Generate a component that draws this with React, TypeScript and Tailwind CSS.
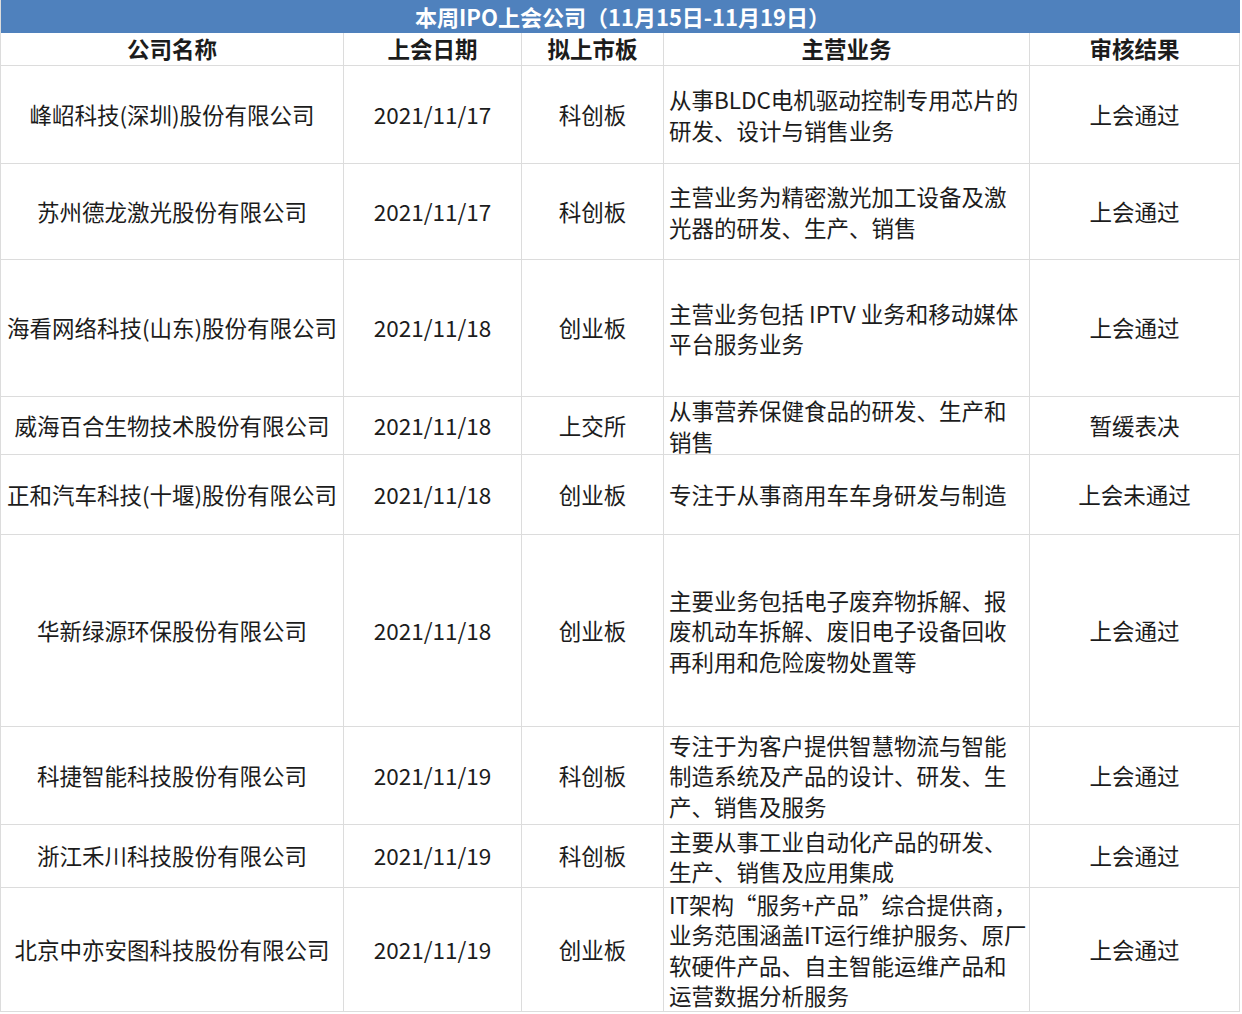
const rows = [
  {
    name: "峰岹科技(深圳)股份有限公司",
    date: "2021/11/17",
    board: "科创板",
    biz: ["从事BLDC电机驱动控制专用芯片的", "研发、设计与销售业务"],
    result: "上会通过",
    h: "h-[98px]",
  },
  {
    name: "苏州德龙激光股份有限公司",
    date: "2021/11/17",
    board: "科创板",
    biz: ["主营业务为精密激光加工设备及激", "光器的研发、生产、销售"],
    result: "上会通过",
    h: "h-[96px]",
  },
  {
    name: "海看网络科技(山东)股份有限公司",
    date: "2021/11/18",
    board: "创业板",
    biz: ["主营业务包括 IPTV 业务和移动媒体", "平台服务业务"],
    result: "上会通过",
    h: "h-[137px]",
  },
  {
    name: "威海百合生物技术股份有限公司",
    date: "2021/11/18",
    board: "上交所",
    biz: ["从事营养保健食品的研发、生产和", "销售"],
    result: "暂缓表决",
    h: "h-[58px]",
  },
  {
    name: "正和汽车科技(十堰)股份有限公司",
    date: "2021/11/18",
    board: "创业板",
    biz: ["专注于从事商用车车身研发与制造"],
    result: "上会未通过",
    h: "h-[80px]",
  },
  {
    name: "华新绿源环保股份有限公司",
    date: "2021/11/18",
    board: "创业板",
    biz: [
      "主要业务包括电子废弃物拆解、报",
      "废机动车拆解、废旧电子设备回收",
      "再利用和危险废物处置等",
    ],
    result: "上会通过",
    h: "h-[192px]",
  },
  {
    name: "科捷智能科技股份有限公司",
    date: "2021/11/19",
    board: "科创板",
    biz: [
      "专注于为客户提供智慧物流与智能",
      "制造系统及产品的设计、研发、生",
      "产、销售及服务",
    ],
    result: "上会通过",
    h: "h-[98px]",
  },
  {
    name: "浙江禾川科技股份有限公司",
    date: "2021/11/19",
    board: "科创板",
    biz: ["主要从事工业自动化产品的研发、", "生产、销售及应用集成"],
    result: "上会通过",
    h: "h-[63px]",
  },
  {
    name: "北京中亦安图科技股份有限公司",
    date: "2021/11/19",
    board: "创业板",
    biz: [
      "IT架构“服务+产品”综合提供商，",
      "业务范围涵盖IT运行维护服务、原厂",
      "软硬件产品、自主智能运维产品和",
      "运营数据分析服务",
    ],
    result: "上会通过",
    h: "h-[124px]",
  },
];

const cols = "grid grid-rows-1 grid-cols-[343px_178px_142px_366px_210px]";
const cell = "border-r border-b border-[#dcdcdc] flex items-center justify-center whitespace-nowrap";

export default function App() {
  return (
    <main
      className="w-[1242px] h-[1014px] bg-white text-[#1c1c1c] overflow-hidden"
      style={{ fontFamily: '"Noto Sans CJK SC", "Noto Sans", sans-serif' }}
    >
      <div className="w-[1240px] border-l border-[#dcdcdc]">
        <div className="h-[33px] bg-[#4f81bd] text-white text-[22px] font-bold flex items-center justify-center pl-[4px]">
          本周IPO上会公司（11月15日-11月19日）
        </div>

        <div className={`${cols} h-[33px] text-[22.5px] font-bold`}>
          <div className={cell}>公司名称</div>
          <div className={cell}>上会日期</div>
          <div className={cell}>拟上市板</div>
          <div className={cell}>主营业务</div>
          <div className={cell}>审核结果</div>
        </div>

        {rows.map((r) => (
          <div key={r.name} className={`${cols} ${r.h} text-[22.5px]`}>
            <div className={cell}>{r.name}</div>
            <div className={cell}>{r.date}</div>
            <div className={cell}>{r.board}</div>
            <div className="min-h-0 border-r border-b border-[#dcdcdc] flex flex-col justify-center pl-[5px] whitespace-nowrap leading-[30.5px]">
              {r.biz.map((line) => (
                <span key={line}>{line}</span>
              ))}
            </div>
            <div className={cell}>{r.result}</div>
          </div>
        ))}
      </div>
    </main>
  );
}
